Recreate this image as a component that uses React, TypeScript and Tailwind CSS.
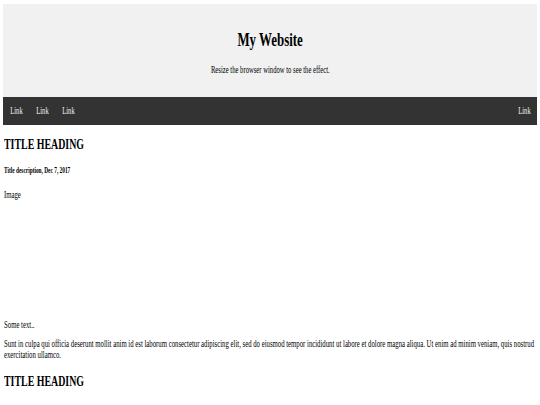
import React from "react";

function T({ children, className = "" }: { children: React.ReactNode; className?: string }) {
  return <span className={`inline-block whitespace-nowrap ${className}`}>{children}</span>;
}

function NavLink() {
  return (
    <a className="w-[26px] flex justify-center cursor-pointer">
      <T className="scale-x-[0.66]">Link</T>
    </a>
  );
}

export default function App() {
  return (
    <div className="min-h-[405px] bg-white pt-[4px] px-[3px] overflow-x-hidden font-['Liberation_Serif','Times_New_Roman',serif] text-black">
      <header className="h-[93px] bg-[#f1f1f1] flex flex-col items-center pt-[26px]">
        <h1 className="text-[19px] leading-[19px] font-bold">
          <T className="scale-x-[0.68]">My Website</T>
        </h1>
        <p className="mt-[15px] text-[10px] leading-[12px]">
          <T className="scale-x-[0.665]">Resize the browser window to see the effect.</T>
        </p>
      </header>
      <nav className="h-[28px] bg-[#333333] flex items-center justify-between text-[10px] leading-[12px] text-[#f2f2f2]">
        <div className="flex">
          <NavLink />
          <NavLink />
          <NavLink />
        </div>
        <NavLink />
      </nav>
      <main className="px-[1px]">
        <h2 className="mt-[12.4px] text-[15px] leading-[15px] font-bold">
          <T className="origin-left scale-x-[0.66]">TITLE HEADING</T>
        </h2>
        <h5 className="mt-[13.6px] text-[8px] leading-[10px] font-bold">
          <T className="origin-left scale-x-[0.67]">Title description, Dec 7, 2017</T>
        </h5>
        <div className="mt-[13px] h-[118px] text-[10px] leading-[12px]">
          <T className="origin-left scale-x-[0.675]">Image</T>
        </div>
        <p className="mt-[12px] text-[10px] leading-[12px]">
          <T className="origin-left scale-x-[0.675]">Some text..</T>
        </p>
        <p className="mt-[7px] text-[10px] leading-[11.5px]">
          <T className="block origin-left scale-x-[0.675]">
            Sunt in culpa qui officia deserunt mollit anim id est laborum consectetur adipiscing elit, sed do eiusmod tempor incididunt ut labore et dolore magna aliqua. Ut enim ad minim veniam, quis nostrud
          </T>
          <T className="block origin-left scale-x-[0.675]">exercitation ullamco.</T>
        </p>
        <h2 className="mt-[13.4px] text-[15px] leading-[15px] font-bold">
          <T className="origin-left scale-x-[0.66]">TITLE HEADING</T>
        </h2>
      </main>
    </div>
  );
}
